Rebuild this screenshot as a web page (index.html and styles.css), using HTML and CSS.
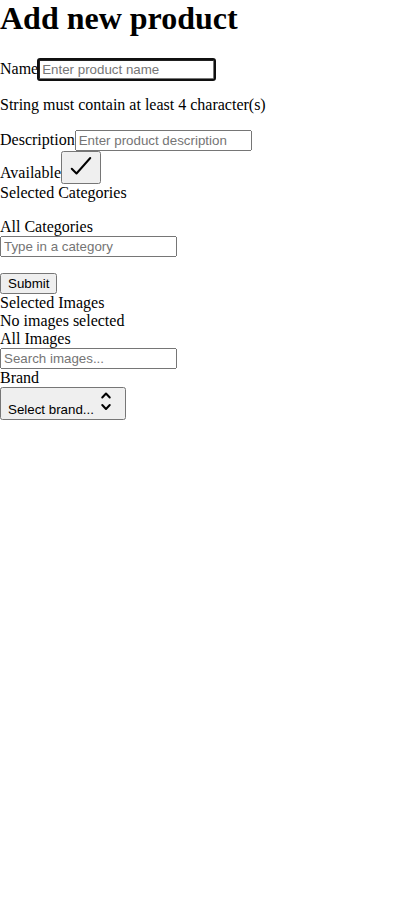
FILE: index.html
```html
<!DOCTYPE html>
<html>
<head>
<meta charset="utf-8">
<link rel="stylesheet" href="styles.css">
</head>
<body>
<h1 class="title">Add new product</h1>
<form class="form">
  <div class="field">
    <label>Name<input class="text focused" type="text" placeholder="Enter product name"></label>
    <p class="error">String must contain at least 4 character(s)</p>
  </div>
  <div>
    <label>Description<input class="text" type="text" placeholder="Enter product description"></label>
  </div>
  <div>
    <label>Available</label><button type="button" class="btn"><svg class="ico" width="24" height="24" viewBox="0 0 24 24" fill="none" stroke="currentColor" stroke-width="2" stroke-linecap="round" stroke-linejoin="round"><path d="M2.75 14.75l4.75 4.75L21.25 4"/></svg></button>
  </div>
  <div>Selected Categories</div>
  <div class="cats">
    <div>All Categories</div>
    <input class="text" type="text" placeholder="Type in a category">
  </div>
  <button type="submit" class="btn submit">Submit</button>
  <div>Selected Images</div>
  <div>No images selected</div>
  <div>All Images</div>
  <input class="text" type="text" placeholder="Search images...">
  <div>Brand</div>
  <button type="button" class="btn">Select brand...<svg class="ico" width="24" height="24" viewBox="0 0 24 24" fill="none" stroke="currentColor" stroke-width="2" stroke-linecap="round" stroke-linejoin="round"><path d="M8.25 15 12 19l3.75-4m-7.5-7.5L12 3.5l3.75 4"/></svg></button>
</form>
</body>
</html>
```
FILE: styles.css
```css
body {
  margin: 0;
  font-family: "Liberation Serif", serif;
  font-size: 16px;
  color: #000;
  background: #fff;
}
.title {
  margin: 0 0 22.44px;
  font-size: 32px;
  font-weight: bold;
}
.form {
  margin: 0;
}
.field {
  margin-bottom: 16px;
}
.error {
  margin: 16px 0 0;
}
.text {
  font-family: "Liberation Sans", sans-serif;
  font-size: 13.3333px;
  box-sizing: border-box;
  width: 177px;
}
.focused {
  outline: 2px solid #101010;
  outline-offset: -1px;
  border-radius: 2px;
}
.btn {
  font-family: "Liberation Sans", sans-serif;
  font-size: 13.3333px;
}
.ico {
  display: inline-block;
}
.cats {
  margin-top: 16px;
  margin-bottom: 16px;
}
.submit {
  display: block;
}
```
